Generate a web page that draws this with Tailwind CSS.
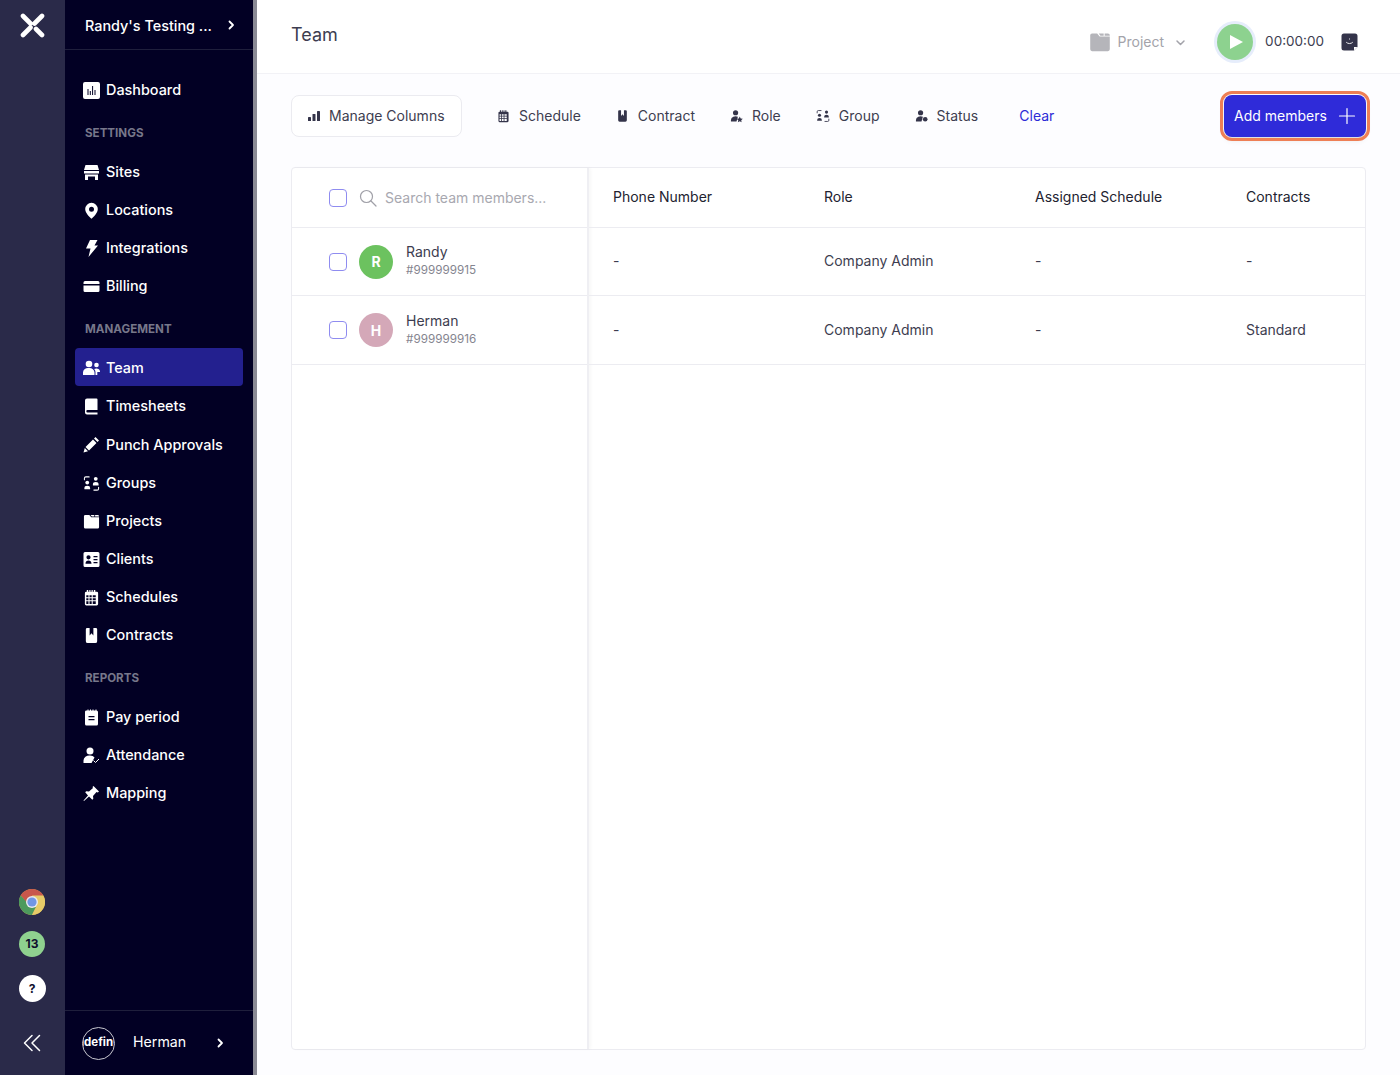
<!DOCTYPE html>
<html lang="en">
<head>
<meta charset="utf-8">
<title>Team</title>
<script src="https://cdn.jsdelivr.net/npm/@tailwindcss/browser@4"></script>
</head>
<body class="m-0 font-['Inter',sans-serif] bg-[#fdfdff]">
<svg width="0" height="0" class="absolute">
  <defs>
    <symbol id="i-cal" viewBox="0 0 18 18"><path fill-rule="evenodd" d="M4 1h1.500v2h1.200V1h1.200v2h1.200V1h1.200v2h1.200V1H13v2h1.500A1.500 1.500 0 0 1 16 4.500V16a1.500 1.500 0 0 1-1.500 1.500h-11A1.500 1.500 0 0 1 2 16V4.500A1.500 1.500 0 0 1 3.500 3H4zM3.500 6.500v2.200h2.300V6.500zm3.400 0v2.200h2.300V6.500zm3.400 0v2.200h3.200V6.500zM3.500 9.800V12h2.300V9.800zm3.400 0V12h2.300V9.800zm3.400 0V12h3.200V9.800zM3.500 13.100v2.900h2.300v-2.900zm3.400 0v2.900h2.300v-2.900zm3.400 0v2.900h3.200v-2.900z"/></symbol>
    <symbol id="i-contract" viewBox="0 0 18 18"><path d="M3 2.500A1.500 1.500 0 0 1 4.500 1H7v8l2-2.500L11 9V1h2.500A1.500 1.500 0 0 1 15 2.500V15a2 2 0 0 1-2 2H5a2 2 0 0 1-2-2z"/></symbol>
    <symbol id="i-groups" viewBox="0 0 18 18"><circle cx="4.500" cy="8" r="2"/><path d="M1.500 14a3 2.500 0 0 1 6 0v1h-6z"/><circle cx="13.500" cy="4" r="2"/><path d="M10.500 10a3 2.500 0 0 1 6 0v1h-6z"/><path fill="none" stroke="currentColor" stroke-width="1.100" stroke-linecap="round" d="M1.500 5V3.500a1.500 1.500 0 0 1 1.500-1.500h3.500M16.500 13v1.500a1.500 1.500 0 0 1-1.500 1.500h-3.500"/></symbol>
    <symbol id="i-folder" viewBox="0 0 18 18"><path d="M1 3.500A1.500 1.500 0 0 1 2.500 2h4.200l2 2.500H17V15a1.500 1.500 0 0 1-1.500 1.500h-13A1.500 1.500 0 0 1 1 15z"/><path d="M8 2h4v1.800H9.300zM12.800 2h2.700A1.500 1.500 0 0 1 17 3.500v.3h-4.200z"/></symbol>
  </defs>
</svg>

<div class="flex w-[1400px] h-[1075px] overflow-hidden">
  <!-- rail -->
  <div class="w-[65px] shrink-0 bg-[#2a2a49] flex flex-col items-center pr-[1px]">
    <svg class="mt-[13px] text-white" width="25" height="25" viewBox="0 0 25 25"><g stroke="currentColor" stroke-linecap="round" stroke-width="4.600" fill="none"><path d="M3 3l7.500 7.500M22 3l-7.500 7.500M3 22l7.500-7.500M22 22l-6-6"/></g></svg>
    <div class="mt-auto flex flex-col items-center">
      <svg width="26" height="26" viewBox="0 0 26 26">
        <circle cx="13" cy="13" r="13" fill="#d1a94f"/>
        <path d="M13 0A13 13 0 0 0 1.740 6.500L7 13h6l11.260-6.500A13 13 0 0 0 13 0z" fill="#c8574c"/>
        <path d="M1.740 6.500A13 13 0 0 0 13 26l4-8-7-2z" fill="#4d9a5d"/>
        <path d="M24.260 6.500H13l4 11.500L13 26A13 13 0 0 0 24.260 6.500z" fill="#e6cb68"/>
        <circle cx="13" cy="13" r="6" fill="#e9e9ee"/><circle cx="13" cy="13" r="4.600" fill="#7096e6"/>
      </svg>
      <div class="mt-[16px] w-[26px] h-[26px] rounded-full bg-[#8fd18f] text-[#10102e] text-[12px] font-bold flex items-center justify-center">13</div>
      <div class="mt-[18px] w-[27px] h-[27px] rounded-full bg-white text-[#10102e] text-[12px] font-bold flex items-center justify-center">?</div>
      <svg class="mt-[32px] mb-[23px] text-white" width="18" height="18" viewBox="0 0 18 18" fill="none" stroke="currentColor" stroke-width="1.500" stroke-linecap="round" stroke-linejoin="round"><path d="M9 1.500L1.500 9 9 16.500M16.500 1.500L9 9l7.500 7.500"/></svg>
    </div>
  </div>

  <!-- nav -->
  <div class="w-[188px] shrink-0 bg-[#020024] flex flex-col text-white">
    <div class="h-[50px] shrink-0 border-b border-[#1f1f3c] flex items-center pl-[20px] pr-[17px] justify-between">
      <span class="text-[14.4px] font-medium whitespace-nowrap pt-[2px]">Randy's Testing ...</span>
      <svg width="10" height="10" viewBox="0 0 10 10" fill="none" stroke="currentColor" stroke-width="1.800" stroke-linecap="round" stroke-linejoin="round"><path d="M3.500 1.500L7 5 3.500 8.500"/></svg>
    </div>
    <nav class="px-[10px] pt-[20px] text-[14.4px] font-medium">
      <a class="h-[38px] pt-[2px] pl-[8px] rounded flex items-center gap-[6px]">
        <svg class="w-[17px] h-[17px] fill-white" viewBox="0 0 17 17"><path fill-rule="evenodd" d="M2 0h13a2 2 0 0 1 2 2v13a2 2 0 0 1-2 2H2a2 2 0 0 1-2-2V2a2 2 0 0 1 2-2zM4.500 7v6h1V7zm2.300 2v4h1V9zm2.300-5v9h1V4zm2.400 4v5h1V8z"/></svg>
        <span>Dashboard</span></a>
      <div class="h-[44px] pt-[8px] pl-[10px] flex items-center text-[11.6px] font-bold text-[#77778a]">SETTINGS</div>
      <a class="h-[38px] pt-[2px] pl-[8px] flex items-center gap-[6px]">
        <svg class="w-[17px] h-[17px] fill-white" viewBox="0 0 17 17"><path d="M2.500 1h12L16 6H1zM1 7h15v2.500H1zM2 10.500h13V16h-3v-3.500H5V16H2z"/></svg>
        <span>Sites</span></a>
      <a class="h-[38px] pt-[2px] pl-[8px] flex items-center gap-[6px]">
        <svg class="w-[17px] h-[17px] fill-white" viewBox="0 0 17 17"><path fill-rule="evenodd" d="M8.500 .8a6.300 6.300 0 0 1 6.300 6.300c0 3.900-4.300 8-6.300 9.700-2-1.700-6.300-5.800-6.300-9.700A6.300 6.300 0 0 1 8.500 .8zm0 3.900a2.500 2.500 0 1 0 0 5 2.500 2.500 0 0 0 0-5z"/></svg>
        <span>Locations</span></a>
      <a class="h-[38px] pt-[2px] pl-[8px] flex items-center gap-[6px]">
        <svg class="w-[17px] h-[17px] fill-white" viewBox="0 0 17 17"><path d="M7 0h7.500l-3 5.500H15L5.500 17l2-8.500H3z"/></svg>
        <span>Integrations</span></a>
      <a class="h-[38px] pt-[2px] pl-[8px] flex items-center gap-[6px]">
        <svg class="w-[17px] h-[17px] fill-white" viewBox="0 0 17 17"><path d="M2 3h13a1.500 1.500 0 0 1 1.500 1.500V6H.5V4.500A1.500 1.500 0 0 1 2 3zM.5 7.500h16v5a1.500 1.500 0 0 1-1.500 1.500H2A1.500 1.500 0 0 1 .5 12.500z"/></svg>
        <span>Billing</span></a>
      <div class="h-[44px] pt-[8px] pl-[10px] flex items-center text-[11.6px] font-bold text-[#77778a]">MANAGEMENT</div>
      <a class="h-[38px] pt-[2px] pl-[8px] rounded bg-[#23208f] flex items-center gap-[6px]">
        <svg class="w-[17px] h-[17px] fill-white" viewBox="0 0 17 17"><circle cx="6" cy="4" r="3.300"/><circle cx="13.500" cy="5" r="2.300"/><path d="M0 15v-2.500A5 4.500 0 0 1 6 8a5 4.500 0 0 1 5.500 4.500V15zM12.500 15v-2.500c0-1.500-.5-2.500-1.300-3.500 2-1.300 5.800-.5 5.800 2.500V12h-2.700v3z"/></svg>
        <span>Team</span></a>
      <a class="h-[38px] pt-[2px] pl-[8px] flex items-center gap-[6px]">
        <svg class="w-[17px] h-[17px] fill-white" viewBox="0 0 17 17"><path d="M4 .5h9.500a1 1 0 0 1 1 1V12h-10a1.200 1.200 0 0 0 0 2.400h10v2.100H4a2 2 0 0 1-2-2V2.500a2 2 0 0 1 2-2z"/></svg>
        <span>Timesheets</span></a>
      <a class="h-[39px] pt-[2px] pl-[8px] flex items-center gap-[6px]">
        <svg class="w-[17px] h-[17px] fill-white" viewBox="0 0 17 17"><path d="M12.500 1l3.500 3.500-1.500 1.500L11 2.500zM10 3.500L13.500 7 6 14.500 2.500 11zM1.800 12l3.200 3.200L.5 16.500z"/></svg>
        <span>Punch Approvals</span></a>
      <a class="h-[38px] pt-[2px] pl-[8px] flex items-center gap-[6px]">
        <svg class="w-[17px] h-[17px] fill-white text-white"><use href="#i-groups"/></svg>
        <span>Groups</span></a>
      <a class="h-[38px] pt-[2px] pl-[8px] flex items-center gap-[6px]">
        <svg class="w-[17px] h-[17px] fill-white"><use href="#i-folder"/></svg>
        <span>Projects</span></a>
      <a class="h-[38px] pt-[2px] pl-[8px] flex items-center gap-[6px]">
        <svg class="w-[17px] h-[17px] fill-white" viewBox="0 0 17 17"><path fill-rule="evenodd" d="M2 1h13a1.500 1.500 0 0 1 1.500 1.500v12A1.500 1.500 0 0 1 15 16H2a1.500 1.500 0 0 1-1.500-1.500v-12A1.500 1.500 0 0 1 2 1zm3.500 3.200a2.100 2.100 0 1 0 0 4.200 2.100 2.100 0 0 0 0-4.200zM2.500 12.800h6c0-2-1.300-3.200-3-3.200s-3 1.200-3 3.200zM10.500 5v1.300h4V5zm0 3v1.300h4V8zm0 3v1.300h4V11z"/></svg>
        <span>Clients</span></a>
      <a class="h-[38px] pt-[2px] pl-[8px] flex items-center gap-[6px]">
        <svg class="w-[17px] h-[17px] fill-white"><use href="#i-cal"/></svg>
        <span>Schedules</span></a>
      <a class="h-[38px] pt-[2px] pl-[8px] flex items-center gap-[6px]">
        <svg class="w-[17px] h-[17px] fill-white"><use href="#i-contract"/></svg>
        <span>Contracts</span></a>
      <div class="h-[44px] pt-[8px] pl-[10px] flex items-center text-[11.6px] font-bold text-[#77778a]">REPORTS</div>
      <a class="h-[38px] pt-[2px] pl-[8px] flex items-center gap-[6px]">
        <svg class="w-[17px] h-[17px] fill-white" viewBox="0 0 17 17"><path fill-rule="evenodd" d="M3 1.500h1.500V.5h1v1h1.500V.5h1v1h1.500V.5h1v1H12.500V.5h1v1A1.500 1.500 0 0 1 15 3v12a1.500 1.500 0 0 1-1.500 1.500h-10A1.500 1.500 0 0 1 2 15V3a1.500 1.500 0 0 1 1-1.500zM5.500 7v1.300h6V7zm0 3v1.300h6V10z"/></svg>
        <span>Pay period</span></a>
      <a class="h-[38px] pt-[2px] pl-[8px] flex items-center gap-[6px]">
        <svg class="w-[17px] h-[17px] fill-white" viewBox="0 0 17 17"><circle cx="7" cy="4" r="3.500"/><path d="M.5 16v-2.500A6 5 0 0 1 7 8.500c2 0 3.500.8 4.500 2L8.500 16z"/><path d="M10.500 13.500l2 2 3.500-3.500" fill="none" stroke="#fff" stroke-width="1"/></svg>
        <span>Attendance</span></a>
      <a class="h-[38px] pt-[2px] pl-[8px] flex items-center gap-[6px]">
        <svg class="w-[17px] h-[17px] fill-white" viewBox="0 0 17 17"><path d="M10.500 1L16 6.500 14.800 7.500 13.500 7 10 11l.3 2.800-1 1L6 11.500 1 16l-.5-.5L5 10.500 2.200 7.200l1-1L6 6.500 10 3l-.5-1z"/></svg>
        <span>Mapping</span></a>
    </nav>
    <div class="mt-auto h-[65px] border-t border-[#1f1f3c] flex items-center pl-[17px] pr-[28px]">
      <div class="w-[33px] h-[33px] rounded-full border border-[#c8c8d0] overflow-hidden flex items-center justify-center shrink-0">
        <span class="text-[11.5px] font-bold whitespace-nowrap">undefined</span>
      </div>
      <span class="ml-[18px] text-[14.2px] -translate-y-[1px]">Herman</span>
      <svg class="ml-auto" width="10" height="10" viewBox="0 0 10 10" fill="none" stroke="currentColor" stroke-width="1.800" stroke-linecap="round" stroke-linejoin="round"><path d="M3.500 1.500L7 5 3.500 8.500"/></svg>
    </div>
  </div>
  <div class="w-[4px] shrink-0 bg-[#8a8a94]"></div>

  <!-- main -->
  <div class="flex-1 min-w-0 flex flex-col">
    <header class="h-[74px] shrink-0 border-b border-[#f2f2f6] bg-white flex items-center pl-[34px] pr-[42px]">
      <h1 class="text-[18px] font-normal text-[#3d3d50] -translate-y-[2px]">Team</h1>
      <div class="ml-auto flex items-center translate-y-[5px]">
        <svg class="w-[22px] h-[22px] fill-[#b5b5ba]"><use href="#i-folder"/></svg>
        <span class="ml-[7px] text-[14px] text-[#a3a3aa]">Project</span>
        <svg class="ml-[11px] mt-[2px]" width="11" height="11" viewBox="0 0 11 11" fill="none" stroke="#a3a3aa" stroke-width="1.500" stroke-linecap="round" stroke-linejoin="round"><path d="M2 4l3.500 3.500L9 4"/></svg>
        <div class="ml-[31px] w-[36px] h-[36px] rounded-full bg-[#8dd28f] ring-[3px] ring-[#e6edfb] flex items-center justify-center">
          <svg class="ml-[2px]" width="15" height="16" viewBox="0 0 15 16"><path d="M1 1l13 7-13 7z" fill="#fff"/></svg>
        </div>
        <span class="ml-[12px] text-[13.5px] text-[#3d3d50]">00:00:00</span>
        <svg class="ml-[17px]" width="17" height="18" viewBox="0 0 17 18"><path d="M3 .5h11A2.500 2.500 0 0 1 16.500 3v11l-3.500 3.500H3A2.500 2.500 0 0 1 .5 15V3A2.500 2.500 0 0 1 3 .5z" fill="#34344a"/><path d="M5.500 9.500c1.500 1.500 4.500 1.500 6 0" fill="none" stroke="#fff" stroke-width=".9" stroke-linecap="round"/><path d="M8.500 5.500v1" stroke="#fff" stroke-width=".9"/><path d="M13 17.500v-3.500h3.500z" fill="#fff"/></svg>
      </div>
    </header>

    <div class="flex-1 min-h-0 flex flex-col pl-[34px] pr-[34px] pt-[21px] pb-[25px]">
      <div class="flex items-center text-[14px] text-[#3d3d50] relative">
        <button class="w-[171px] h-[42px] bg-white border border-[#ebebf0] rounded-lg flex items-center pl-[15px] gap-[8px]">
          <svg width="14" height="14" viewBox="0 0 14 14" fill="#34344a"><rect x="1" y="8" width="3" height="4" rx=".6"/><rect x="5.500" y="5" width="3" height="7" rx=".6"/><rect x="10" y="2" width="3" height="10" rx=".6"/></svg>
          <span class="text-[14px] text-[#3d3d50] pb-[2px]">Manage Columns</span>
        </button>
        <div class="ml-[35px] flex items-center gap-[35px]">
          <span class="flex items-center gap-[9px]"><svg class="w-[13px] h-[14px] fill-[#34344a]" preserveAspectRatio="none"><use href="#i-cal"/></svg><span class="pb-[2px]">Schedule</span></span>
          <span class="flex items-center gap-[9px]"><svg class="w-[13px] h-[14px] fill-[#34344a]"><use href="#i-contract"/></svg><span class="pb-[2px]">Contract</span></span>
          <span class="flex items-center gap-[9px]">
            <svg class="w-[13px] h-[14px] fill-[#34344a]" viewBox="0 0 14 14"><circle cx="6" cy="3.500" r="2.800"/><path d="M1 13v-1.800a5 4 0 0 1 7.500-3.300L7 13z"/><path d="M10.500 7.500l1 2.100 2.300.3-1.700 1.600.4 2.300-2-1.100-2 1.100.4-2.300-1.700-1.600 2.300-.3z"/></svg><span class="pb-[2px]">Role</span></span>
          <span class="flex items-center gap-[9px]"><svg class="w-[14px] h-[14px] fill-[#34344a] text-[#34344a]"><use href="#i-groups"/></svg><span class="pb-[2px]">Group</span></span>
          <span class="flex items-center gap-[9px]">
            <svg class="w-[13px] h-[14px] fill-[#34344a]" viewBox="0 0 14 14"><circle cx="6" cy="3.500" r="2.800"/><path d="M1 13v-1.800a5 4 0 0 1 7.500-3.300L7 13z"/><circle cx="11" cy="10.500" r="2.500"/></svg><span class="pb-[2px]">Status</span></span>
        </div>
        <span class="ml-[41px] text-[#2c2bd6] pb-[2px]">Clear</span>
        <button class="ml-auto w-[142px] h-[42px] rounded-lg bg-[#2f2bd9] text-white outline-[3px] outline-offset-[1px] outline-[#ee7f55] shadow-md flex items-center pl-[10px] pr-[10px] justify-between">
          <span class="text-[14px] pb-[2px]">Add members</span>
          <svg width="18" height="18" viewBox="0 0 18 18" fill="none" stroke="#fff" stroke-width="1.200" stroke-linecap="round"><path d="M9 1.500v15M1.500 9h15"/></svg>
        </button>
      </div>

      <div class="mt-[30px] flex-1 min-h-0 bg-white border border-[#ececf1] rounded flex text-[14px] text-[#3d3d50]">
        <div class="w-[297px] shrink-0 border-r-2 border-[#efeff3] shadow-[2px_0_3px_rgba(0,0,0,0.03)] flex flex-col">
          <div class="h-[60px] border-b border-[#ececf1] flex items-center pl-[37px]">
            <span class="w-[18px] h-[18px] rounded-[4px] border border-[#8f8cf0] shrink-0"></span>
            <svg class="ml-[12px] shrink-0" width="18" height="18" viewBox="0 0 18 18" fill="none" stroke="#a0a0a8" stroke-width="1.200" stroke-linecap="round"><circle cx="7.500" cy="7.500" r="6"/><path d="M12 12l5 5"/></svg>
            <span class="ml-[8px] text-[#a8a8b0] whitespace-nowrap">Search team members...</span>
          </div>
          <div class="h-[68px] border-b border-[#ececf1] flex items-center pl-[37px]">
            <span class="w-[18px] h-[18px] rounded-[4px] border border-[#8f8cf0] shrink-0"></span>
            <span class="ml-[12px] w-[34px] h-[34px] rounded-full bg-[#6cc25f] text-white text-[14px] font-bold flex items-center justify-center shrink-0">R</span>
            <div class="ml-[13px] flex flex-col gap-[1px] -translate-y-[1px]">
              <span class="text-[14px] leading-[18px]">Randy</span>
              <span class="text-[11.7px] leading-[16px] text-[#85858f]">#999999915</span>
            </div>
          </div>
          <div class="h-[69px] border-b border-[#ececf1] flex items-center pl-[37px]">
            <span class="w-[18px] h-[18px] rounded-[4px] border border-[#8f8cf0] shrink-0"></span>
            <span class="ml-[12px] w-[34px] h-[34px] rounded-full bg-[#d4a8b8] text-white text-[14px] font-bold flex items-center justify-center shrink-0">H</span>
            <div class="ml-[13px] flex flex-col gap-[1px] -translate-y-[1px]">
              <span class="text-[14px] leading-[18px]">Herman</span>
              <span class="text-[11.7px] leading-[16px] text-[#85858f]">#999999916</span>
            </div>
          </div>
        </div>
        <div class="flex-1 min-w-0 flex flex-col">
          <div class="h-[60px] border-b border-[#ececf1] pl-[24px] pb-[2px] grid grid-cols-[211px_211px_211px_1fr] items-center text-[#222230]">
            <span>Phone Number</span><span>Role</span><span>Assigned Schedule</span><span>Contracts</span>
          </div>
          <div class="h-[68px] border-b border-[#ececf1] pl-[24px] pb-[2px] grid grid-cols-[211px_211px_211px_1fr] items-center">
            <span>-</span><span>Company Admin</span><span>-</span><span>-</span>
          </div>
          <div class="h-[69px] border-b border-[#ececf1] pl-[24px] pb-[2px] grid grid-cols-[211px_211px_211px_1fr] items-center">
            <span>-</span><span>Company Admin</span><span>-</span><span>Standard</span>
          </div>
        </div>
      </div>
    </div>
  </div>
</div>
</body>
</html>
